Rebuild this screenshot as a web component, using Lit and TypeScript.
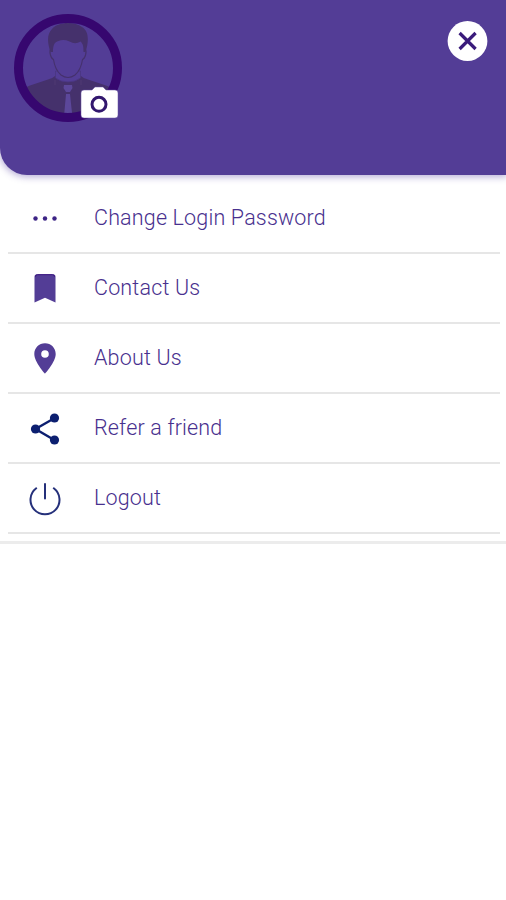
import { LitElement, html, css, svg } from "lit";
import { customElement } from "lit/decorators.js";

const icons = {
  dots: svg`<g fill="#3d2486"><circle cx="10.5" cy="23.500" r="2.200"/><circle cx="20" cy="23.500" r="2.200"/><circle cx="29.500" cy="23.500" r="2.200"/></g>`,
  bookmark: svg`<path fill="#533d96" d="M12 9.200h16a2.500 2.500 0 0 1 2.500 2.500V37.400L20 32.700 9.500 37.400V11.700a2.500 2.500 0 0 1 2.500-2.500z"/><path fill="none" stroke="#3a1580" d="M10.500 11.700q0-2 2-2h15q2 0 2 2"/>`,
  pin: svg`<path fill="#533d96" fill-rule="evenodd" d="M20 8.300c-6 0-10.700 4.700-10.700 10.700 0 8 10.700 19.600 10.700 19.600s10.700-11.600 10.700-19.600c0-6-4.700-10.700-10.700-10.700zm0 6.900a3.800 3.800 0 1 1 0 7.600 3.800 3.800 0 0 1 0-7.600z"/>`,
  share: svg`<g fill="#0c1f70"><path d="M29.300 13.200 10.500 24l18.800 11" fill="none" stroke="#0c1f70" stroke-width="2.400"/><circle cx="29.500" cy="13" r="4.600"/><circle cx="10.500" cy="24" r="4.600"/><circle cx="29.500" cy="35" r="4.600"/></g>`,
  power: svg`<path fill="none" stroke="#25307a" stroke-width="2" stroke-linecap="round" d="M20 9v14.500M11.200 13.300A14.500 14.500 0 1 0 28.800 13.300"/>`,
};

const items = [
  { icon: icons.dots, label: "Change Login Password" },
  { icon: icons.bookmark, label: "Contact Us" },
  { icon: icons.pin, label: "About Us" },
  { icon: icons.share, label: "Refer a friend" },
  { icon: icons.power, label: "Logout" },
];

@customElement("app-root")
export class AppRoot extends LitElement {
  static styles = css`
    :host {
      display: block;
      height: 900px;
      overflow: hidden;
      background: #fff;
      font-family: Roboto, "Liberation Sans", sans-serif;
    }
    .header {
      display: flex;
      justify-content: space-between;
      align-items: flex-start;
      box-sizing: border-box;
      height: 175px;
      padding: 14px 18px 0 14px;
      background: #533d96;
      border-bottom-left-radius: 27px;
      box-shadow: 0 1px 7px 1px rgba(83, 61, 160, 0.42);
    }
    .avatar {
      position: relative;
      width: 108px;
      height: 108px;
    }
    .avatar svg,
    .close svg,
    .icon {
      display: block;
    }
    .camera {
      position: absolute;
      left: 66px;
      top: 72px;
    }
    .close {
      margin-top: 6px;
      padding: 0;
      border: 0;
      background: none;
    }
    .menu {
      display: flex;
      flex-direction: column;
      margin: 0;
      padding: 9px 6px 7px 8px;
      list-style: none;
      border-bottom: 3px solid #ececec;
    }
    .item {
      display: flex;
      align-items: center;
      box-sizing: border-box;
      height: 70px;
      padding-left: 17px;
      gap: 29px;
      border-bottom: 2px solid #e6e6e6;
    }
    .label {
      color: #48308e;
      font-size: 21.5px;
      font-weight: 300;
      line-height: 30px;
      letter-spacing: 0.17px;
      white-space: nowrap;
    }
  `;

  render() {
    return html`
      <header class="header">
        <div class="avatar">
          <svg width="108" height="108" viewBox="0 0 108 108">
            <defs><clipPath id="face"><circle cx="54" cy="54" r="46"/></clipPath></defs>
            <g clip-path="url(#face)">
              <path fill="#45316c" d="M8 76q3-3 8-4.500l18-6q5-1.500 7-3.500h26q2 2 7 3.500l18 6q5 1.500 8 4.500v32H8z"/>
              <path fill="#533d96" stroke="#4a3680" stroke-width=".8" d="M41.500 57v7q5 4 12.500 4t12.500-4v-7z"/>
              <path fill="#533d96" d="M39 28h30v18c-1 7-4 12-8 15q-7 4.500-14 0c-4-3-7-8-8-15z"/>
              <path fill="none" stroke="#45316c" stroke-width="1.100" d="M37 34.500c-2.500 3 0 10 2.500 11 1 7 3.500 12 7.500 15.500q7 5 14 0c4-3.500 6.500-8.500 7.500-15.500 2.500-1 5-8 2.500-11"/>
              <path fill="#45316c" d="M36.500 38C33 28 33 20 38 15c6-7 22-8 30-2 7 4 7 14 3.500 25h-2c0-4 0-8-3-10.500q-5 3.500-11 0-6-2.500-11-.5c-4 1-5.500 4-5.500 11z"/>
              <path fill="#5c479a" d="M50 71h8l.5 3-2.500 4h-4l-2.500-4zM52 80h4l3 28H49.500z"/>
              <path fill="none" stroke="#544077" stroke-width=".7" d="M41 66v5m26-5v5"/>
            </g>
            <circle cx="54" cy="54" r="49.500" fill="none" stroke="#36076f" stroke-width="9"/>
          </svg>
          <svg class="camera" width="40" height="34" viewBox="0 0 40 34">
            <path fill="#fff" stroke="#6450a3" stroke-width=".5" d="M4 4h8l3-3h8l3 3h9q3 0 3 3v22q0 3-3 3H4q-3 0-3-3V7q0-3 3-3z"/>
            <circle cx="19" cy="18.300" r="7" fill="none" stroke="#32176e" stroke-width="3"/>
          </svg>
        </div>
        <button class="close" aria-label="Close">
          <svg width="41" height="42" viewBox="0 0 41 42">
            <circle cx="20.500" cy="21" r="19.900" fill="#fff"/>
            <path fill="none" stroke="#3a1b7b" stroke-width="3.200" d="m12.600 13 16 16m0-16-16 16"/>
          </svg>
        </button>
      </header>
      <ul class="menu">
        ${items.map(
          ({ icon, label }) => html`
            <li class="item">
              <svg class="icon" width="40" height="46" viewBox="0 0 40 46">${icon}</svg>
              <span class="label">${label}</span>
            </li>
          `,
        )}
      </ul>
    `;
  }
}
